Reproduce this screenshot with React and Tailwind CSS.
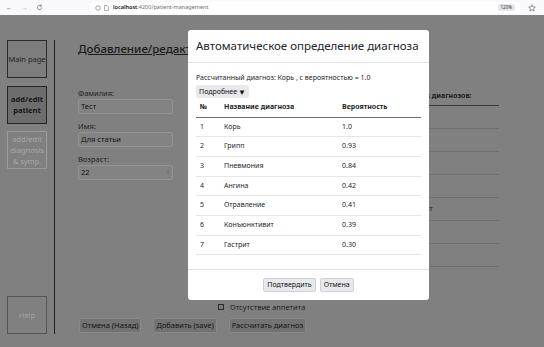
import React from 'react';

const font = { fontFamily: '"Noto Sans", "Open Sans", sans-serif' };

const results = [
  ['1', 'Корь', '1.0'],
  ['2', 'Грипп', '0.93'],
  ['3', 'Пневмония', '0.84'],
  ['4', 'Ангина', '0.42'],
  ['5', 'Отравление', '0.41'],
  ['6', 'Конъюнктивит', '0.39'],
  ['7', 'Гастрит', '0.30'],
];

const sideList = ['Корь', 'ОРЗ', 'Оспа', 'Корь', 'Гастрит', 'ОРВИ', 'Круп'];

// browser toolbar on top of the page
const BrowserBar = () => (
  <div className="h-[15px] bg-[#f9f9fb] flex items-center text-[#5b5b66] shrink-0">
    <div className="w-[90px] flex items-center gap-[8px] pl-[6px] text-[7px] leading-none">
      <span>←</span>
      <span className="text-[#b8b8c0]">→</span>
      <svg width="7" height="7" viewBox="0 0 16 16" fill="none" stroke="#5b5b66" strokeWidth="1.6">
        <path d="M13 8a5 5 0 1 1-1.6-3.7" />
        <path d="M12 1.5v3.5H8.5" />
      </svg>
    </div>
    <div className="w-[430px] h-[11px] bg-white rounded-[3px] flex items-center px-[5px] gap-[3px] text-[5.5px] leading-none">
      <svg width="6" height="6" viewBox="0 0 16 16" fill="none" stroke="#5b5b66" strokeWidth="1.5">
        <circle cx="8" cy="8" r="6" />
      </svg>
      <svg width="5" height="6" viewBox="0 0 12 16" fill="none" stroke="#5b5b66" strokeWidth="1.4">
        <path d="M1 1h6l4 4v10H1z" />
      </svg>
      <span className="ml-[1px]">
        <span className="text-[#15141a] font-semibold">localhost</span>
        <span className="text-[#6b6b75]">:4200/patient-management</span>
      </span>
      <span className="ml-auto bg-[#e6e6ea] rounded-[2px] px-[3px] py-[1px] text-[4.5px] text-[#333]">120%</span>
    </div>
    <svg className="ml-[8px]" width="8" height="8" viewBox="0 0 16 16" fill="none" stroke="#5b5b66" strokeWidth="1.3">
      <path d="M8 1.5l1.9 4.2 4.6.5-3.4 3.1 1 4.5L8 11.5l-4.1 2.3 1-4.5L1.5 6.2l4.6-.5z" />
    </svg>
  </div>
);

const SideButton = ({ children, className }) => (
  <div className={`w-[40px] h-[38px] border flex items-center justify-center text-center text-[7.5px] leading-[11px] ${className}`}>
    {children}
  </div>
);

const Field = ({ label, value, spin }) => (
  <div className="mb-[6px]">
    <div className="text-[7.5px] text-[#1f1f1f] leading-[12px]">{label}</div>
    <div className="w-[95px] h-[15px] bg-[#838383] border border-[#939393] rounded-[2px] flex items-center px-[2px] text-[7.5px] text-[#111]">
      <span>{value}</span>
      {spin && <span className="ml-auto text-[5px] text-[#666] leading-none">⇕</span>}
    </div>
  </div>
);

const PageButton = ({ children }) => (
  <div className="h-[15px] px-[2px] bg-[#737373] border border-[#888] rounded-[2px] flex items-center text-[7.5px] text-[#111]">
    {children}
  </div>
);

export default function App() {
  return (
    <div className="w-[544px] h-[347px] overflow-hidden relative flex flex-col bg-[#808080]" style={font}>
      <BrowserBar />

      {/* dimmed page */}
      <div className="flex-1 flex pt-[25px]">
        <div className="w-[55px] pl-[7px] border-r border-[#1e1e1e] h-[294px] flex flex-col">
          <SideButton className="border-[#2b2b2b] bg-[#7d7d7d] text-[#1f1f1f]">Main page</SideButton>
          <SideButton className="mt-[8px] border-[#252525] bg-[#6d6d6d] text-[#161616] font-bold">add/edit patient</SideButton>
          <SideButton className="mt-[7px] border-[#9b9b9b] text-[#a8a8a8]">add/edit diagnosis &amp; symp.</SideButton>
          <SideButton className="mt-auto border-[#555] text-[#a0a0a0]">Help</SideButton>
        </div>

        <div className="flex-1 pl-[23px] flex flex-col">
          <h2 className="text-[11.5px] font-medium text-[#1a1a1a] underline leading-[16px] mt-[1px] whitespace-nowrap">
            Добавление/редактирование пациента
          </h2>

          <div className="flex mt-[27px]">
            <div className="w-[141px] pt-[3px]">
              <Field label="Фамилия:" value="Тест" />
              <Field label="Имя:" value="Для статьи" />
              <Field label="Возраст:" value="22" spin />
            </div>
            <div className="w-[184px]" />
            <div className="w-[96px] pt-[5px]">
              <div className="pl-[1px] text-[7px] font-bold text-[#1a1a1a] leading-[14px] pb-[2px] border-b border-[#3a3a3a] whitespace-nowrap">
                Список диагнозов:
              </div>
              {sideList.map((d, i) => (
                <div key={i} className="h-[23px] pl-[4px] border-b border-[#6f6f6f] flex items-center text-[7px] text-[#1a1a1a] whitespace-nowrap">
                  {d}
                </div>
              ))}
            </div>
          </div>

          <div className="mt-auto pl-[140px] flex items-center gap-[6px] text-[7.5px] text-[#1a1a1a] leading-none">
            <span className="w-[6px] h-[6px] border border-[#2b2b2b] bg-[#7a7a7a]" />
            <span>Отсутствие аппетита</span>
          </div>
          <div className="flex gap-[12px] mt-[7px] ml-[1px] mb-[14px]">
            <PageButton>Отмена (Назад)</PageButton>
            <PageButton>Добавить (save)</PageButton>
            <PageButton>Рассчитать диагноз</PageButton>
          </div>
        </div>
      </div>

      {/* modal */}
      <div className="absolute left-[188px] top-[30px] w-[241px] h-[270px] bg-white rounded-[3px] flex flex-col text-[#212529]">
        <div className="h-[33px] border-b border-[#dee2e6] flex items-center px-[8px]">
          <h5 className="text-[11.5px] leading-none whitespace-nowrap">Автоматическое определение диагноза</h5>
        </div>
        <div className="flex-1 px-[8px] pt-[10px]">
          <div className="text-[7px] leading-[10px] whitespace-nowrap">Рассчитанный диагноз: Корь , с вероятностью = 1.0</div>
          <div className="mt-[2px] flex w-fit items-center gap-[1px] h-[13px] px-[3px] bg-[#e9e9ed] rounded-[2px] text-[7px] leading-none text-[#111]">
            Подробнее <span className="text-[8px]">▼</span>
          </div>
          <table className="w-full text-[7px] border-collapse">
            <thead>
              <tr className="border-b-[1.5px] border-[#6c6c6c] h-[19px] text-left">
                <th className="font-bold pl-[4px] w-[28px]">№</th>
                <th className="font-bold w-[118px]">Название диагноза</th>
                <th className="font-bold">Вероятность</th>
              </tr>
            </thead>
            <tbody>
              {results.map((r) => (
                <tr key={r[0]} className="border-b border-[#e6e6e6] h-[19.7px]">
                  <td className="pl-[4px]">{r[0]}</td>
                  <td>{r[1]}</td>
                  <td>{r[2]}</td>
                </tr>
              ))}
            </tbody>
          </table>
        </div>
        <div className="h-[31px] border-t border-[#dee2e6] flex items-center justify-center gap-[4px]">
          <div className="h-[14px] px-[3px] bg-[#e9e9ed] rounded-[2px] border border-[#d0d0d7] flex items-center text-[7px] text-[#111]">Подтвердить</div>
          <div className="h-[14px] px-[3px] bg-[#e9e9ed] rounded-[2px] border border-[#d0d0d7] flex items-center text-[7px] text-[#111]">Отмена</div>
        </div>
      </div>
    </div>
  );
}
